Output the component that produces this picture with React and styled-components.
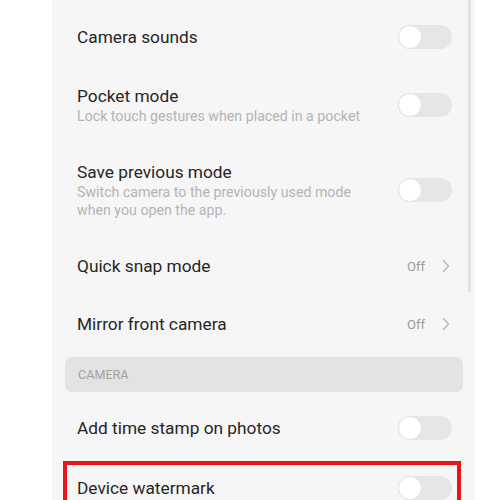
import styled, { createGlobalStyle } from 'styled-components';

const GlobalStyle = createGlobalStyle`
  html, body {
    margin: 0;
    padding: 0;
    background: #ffffff;
    font-family: Roboto, "Noto Sans", sans-serif;
  }
`;

const Toggle = () => (
  <Track>
    <Knob />
  </Track>
);

const Chevron = () => (
  <svg width="8" height="14" viewBox="0 0 8 14" fill="none">
    <path d="M1.5 1.5 L6.5 7 L1.5 12.5" stroke="#b8b8b8" strokeWidth="1.4" strokeLinecap="round" strokeLinejoin="round" />
  </svg>
);

const SettingRow = ({ title, subtitle, value, toggle }) => (
  <Row>
    <Texts>
      <Title>{title}</Title>
      {subtitle && <Subtitle>{subtitle}</Subtitle>}
    </Texts>
    {toggle && <Toggle />}
    {value && (
      <Value>
        <span>{value}</span>
        <Chevron />
      </Value>
    )}
  </Row>
);

export default function App() {
  return (
    <>
      <GlobalStyle />
      <Page>
        <Panel>
          <Scrollbar />
          <SettingRow title="Camera sounds" toggle />
          <SettingRow title="Pocket mode" subtitle="Lock touch gestures when placed in a pocket" toggle />
          <SettingRow
            title="Save previous mode"
            subtitle={<>Switch camera to the previously used mode<br />when you open the app.</>}
            toggle
          />
          <SettingRow title="Quick snap mode" value="Off" />
          <SettingRow title="Mirror front camera" value="Off" />
          <SectionHeader>CAMERA</SectionHeader>
          <SettingRow title="Add time stamp on photos" toggle />
          <Highlighted>
            <SettingRow title="Device watermark" toggle />
            <RedBox />
          </Highlighted>
        </Panel>
      </Page>
    </>
  );
}

const Page = styled.div`
  width: 500px;
  height: 500px;
  overflow: hidden;
  background: #ffffff;
`;

const Panel = styled.div`
  position: relative;
  margin-left: 52px;
  width: 423px;
  height: 500px;
  padding-top: 7px;
  box-sizing: border-box;
  background: #f6f6f6;
  display: flex;
  flex-direction: column;
  overflow: hidden;
`;

const Scrollbar = styled.div`
  position: absolute;
  top: 0;
  right: 4px;
  width: 3px;
  height: 292px;
  background: #e1e1e1;
`;

const Row = styled.div`
  display: flex;
  align-items: center;
  justify-content: space-between;
  flex-shrink: 0;
  min-height: 58px;
  box-sizing: border-box;
  padding: 18px 23px 18px 25px;
`;

const Texts = styled.div`
  display: flex;
  flex-direction: column;
`;

const Title = styled.div`
  font-size: 17.3px;
  line-height: 22px;
  color: #262626;
`;

const Subtitle = styled.div`
  font-size: 14.2px;
  line-height: 18px;
  color: #b4b4b4;
`;

const Track = styled.div`
  position: relative;
  width: 54px;
  height: 24px;
  border-radius: 12px;
  background: #e6e6e6;
  flex-shrink: 0;
`;

const Knob = styled.div`
  position: absolute;
  left: 0;
  top: 0;
  width: 24px;
  height: 24px;
  border-radius: 50%;
  background: #ffffff;
  box-sizing: border-box;
  border: 1px solid #e2e2e2;
`;

const Value = styled.div`
  display: flex;
  align-items: center;
  gap: 17px;
  padding-right: 2px;
  font-size: 13px;
  color: #9a9a9a;
`;

const SectionHeader = styled.div`
  flex-shrink: 0;
  margin: 4px 12px 6px 13px;
  height: 35px;
  padding-left: 13px;
  display: flex;
  align-items: center;
  border-radius: 7px;
  background: #e3e3e3;
  font-size: 12.6px;
  color: #a2a2a2;
`;

const Highlighted = styled.div`
  position: relative;
  flex-shrink: 0;
`;

const RedBox = styled.div`
  position: absolute;
  left: 11px;
  right: 14px;
  top: 3px;
  bottom: -20px;
  border: 4px solid #e8151b;
  pointer-events: none;
`;
